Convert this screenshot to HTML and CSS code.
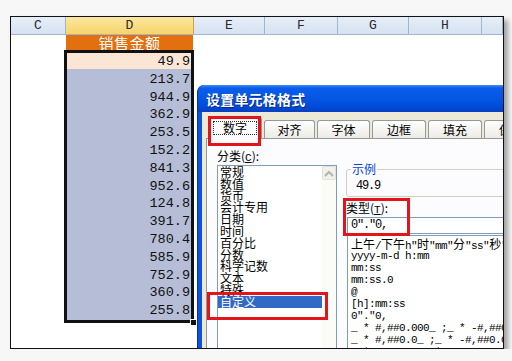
FILE: index.html
```html
<!DOCTYPE html>
<html lang="zh-CN">
<head>
    <meta charset="UTF-8">
    <title>设置单元格格式</title>
    <link rel="stylesheet" href="styles.css">
</head>
<body>
    <div class="frame">
        <div class="colheads">
            <div class="colhead">C</div>
            <div class="colhead active">D</div>
            <div class="colhead">E</div>
            <div class="colhead">F</div>
            <div class="colhead">G</div>
            <div class="colhead">H</div>
            <div class="colhead"></div>
        </div>
        <div class="sheet">
            <div class="title-cell">销售金额</div>
            <div class="selection">
                <div class="cells">
                    <div class="cell first">49.9</div>
                    <div class="cell">213.7</div>
                    <div class="cell">944.9</div>
                    <div class="cell">362.9</div>
                    <div class="cell">253.5</div>
                    <div class="cell">152.2</div>
                    <div class="cell">841.3</div>
                    <div class="cell">952.6</div>
                    <div class="cell">124.8</div>
                    <div class="cell">391.7</div>
                    <div class="cell">780.4</div>
                    <div class="cell">585.9</div>
                    <div class="cell">752.9</div>
                    <div class="cell">360.9</div>
                    <div class="cell">255.8</div>
                </div>
                <span class="fill-handle"></span>
            </div>
        </div>

        <div class="dialog">
            <div class="titlebar">设置单元格格式</div>
            <div class="dlg-body">
                <div class="tabs">
                    <div class="tab current w54"><span class="focus">数字</span></div>
                    <div class="tab w51">对齐</div>
                    <div class="tab w53">字体</div>
                    <div class="tab w54">边框</div>
                    <div class="tab w54">填充</div>
                    <div class="tab w54">保护</div>
                </div>
                <div class="panel">
                    <div class="col-left">
                        <div class="label">分类(<u>C</u>):</div>
                        <div class="catlist">
                            <div class="items">
                                <div class="item">常规</div>
                                <div class="item">数值</div>
                                <div class="item">货币</div>
                                <div class="item">会计专用</div>
                                <div class="item">日期</div>
                                <div class="item">时间</div>
                                <div class="item">百分比</div>
                                <div class="item">分数</div>
                                <div class="item">科学记数</div>
                                <div class="item">文本</div>
                                <div class="item">特殊</div>
                                <div class="item selected">自定义</div>
                            </div>
                            <div class="scroll">
                                <div class="scroll-up">
                                    <svg width="10" height="7" viewBox="0 0 10 7"><path d="M1 6 L5 2 L9 6" fill="none" stroke="#b5b3a8" stroke-width="2"/></svg>
                                </div>
                            </div>
                        </div>
                    </div>
                    <div class="col-right">
                        <fieldset class="sample">
                            <legend>示例</legend>
                            <div class="sample-value">49.9</div>
                        </fieldset>
                        <div class="label type-label">类型(<u>T</u>):</div>
                        <div class="type-input">0"."0,</div>
                        <div class="formats">
                            <div class="fmt"><span class="cjk">上午</span>/<span class="cjk">下午</span>h"<span class="cjk">时</span>"mm"<span class="cjk">分</span>"ss"<span class="cjk">秒</span>"</div>
                            <div class="fmt">yyyy-m-d h:mm</div>
                            <div class="fmt">mm:ss</div>
                            <div class="fmt">mm:ss.0</div>
                            <div class="fmt">@</div>
                            <div class="fmt">[h]:mm:ss</div>
                            <div class="fmt">0"."0,</div>
                            <div class="fmt">_ * #,##0.000_ ;_ * -#,##0.000_ </div>
                            <div class="fmt">_ * #,##0.0_ ;_ * -#,##0.0_ </div>
                            <div class="fmt">_ * #,##0_ ;_ * -#,##0_ </div>
                        </div>
                    </div>
                </div>
            </div>
        </div>

        <span class="mark mark-tab"></span>
        <span class="mark mark-custom"></span>
        <span class="mark mark-type"></span>
    </div>
</body>
</html>
```

FILE: styles.css
```css
* {
    margin: 0;
    padding: 0;
    box-sizing: border-box;
}
body {
    background-color: #f7f7f7;
    font-family: "Noto Sans CJK SC", sans-serif;
    color: #000;
}
.frame {
    position: relative;
    width: 494px;
    height: 333px;
    margin: 16px 0 0 10px;
    border: 1px solid #111;
    background-color: #fff;
    box-shadow: 4px 4px 5px rgba(0, 0, 0, 0.35);
    overflow: hidden;
}

/* column headers */
.colheads {
    display: grid;
    grid-template-columns: 55px 128px 71px 73px 71px 73px 1fr;
    height: 18px;
    border-bottom: 1px solid #9eb6ce;
    background: linear-gradient(#e6eef8, #d6e2f2);
}
.colhead {
    border-right: 1px solid #9eb6ce;
    text-align: center;
    font: 13px/17px "Liberation Mono", monospace;
    color: #2a2a2a;
}
.colhead.active {
    background: linear-gradient(#fbe7a0, #f6d46a);
    border-right-color: #c9a44a;
}

/* sheet */
.sheet {
    padding-left: 53px;
}
.title-cell {
    width: 127px;
    height: 15px;
    margin-left: 2px;
    background-color: #e2700f;
    color: #fff;
    font-size: 15px;
    line-height: 15px;
    text-align: center;
    letter-spacing: 0.5px;
}
.selection {
    position: relative;
    width: 130px;
    height: 273px;
    border: 3px solid #111;
}
.cells {
    height: 267px;
    overflow: hidden;
    background-color: #b6bdd6;
}
.cell {
    height: 17.8px;
    padding-right: 1px;
    text-align: right;
    font: 13.5px/18.6px "Liberation Mono", monospace;
    color: #111;
}
.cell.first {
    background: linear-gradient(#fbe6d6 0, #fbe6d6 16px, transparent 16px);
}
.fill-handle {
    position: absolute;
    right: -6px;
    bottom: -6px;
    width: 7px;
    height: 7px;
    background-color: #111;
    border: 1px solid #fff;
}

/* dialog */
.dialog {
    position: absolute;
    left: 186px;
    top: 68px;
    width: 330px;
    height: 290px;
    background-color: #0b52dc;
    border-left: 1px solid #0a2f9c;
    border-radius: 7px 7px 0 0;
    overflow: hidden;
}
.titlebar {
    height: 27px;
    padding-left: 8px;
    background: linear-gradient(#3f8ff7 0, #0a5cea 3px, #0556e4 50%, #0049d6 85%, #0a3fbb 100%);
    color: #fff;
    font-size: 14px;
    font-weight: bold;
    line-height: 28px;
    letter-spacing: 0.2px;
    text-shadow: 1px 1px 0 #0b2a86;
}
.dlg-body {
    height: 263px;
    margin-left: 4px;
    padding: 5px 0 0 4px;
    background-color: #ece9d8;
}
.tabs {
    display: flex;
    align-items: flex-end;
    gap: 2px;
    height: 21px;
    padding-left: 2px;
    position: relative;
    z-index: 1;
}
.tab {
    height: 18px;
    border: 1px solid #919b9c;
    border-bottom: none;
    border-radius: 3px 3px 0 0;
    background: linear-gradient(#ffffff, #ecebe5);
    font-size: 12px;
    line-height: 17px;
    text-align: center;
    flex-shrink: 0;
}
.tab.current {
    height: 22px;
    margin-bottom: -1px;
    border-top: 2px solid #f7b94a;
    background: #fcfcfe;
    line-height: 18px;
}
.focus {
    display: inline-block;
    padding: 0 9px;
    line-height: 12px;
    border: 1px dotted #333;
}
.w51 { width: 51px; }
.w53 { width: 53px; }
.w54 { width: 54px; }
.panel {
    display: flex;
    gap: 9px;
    height: 240px;
    padding: 10px 0 0 10px;
    border: 1px solid #919b9c;
    background-color: #fcfcfe;
}
.label {
    font-size: 12px;
    line-height: 14px;
    height: 14px;
}
.label u {
    text-decoration: underline;
    font-family: "Liberation Mono", monospace;
    font-size: 11px;
}
.col-left {
    width: 120px;
    flex-shrink: 0;
}
.catlist {
    display: flex;
    height: 200px;
    margin-top: 2px;
    border: 1px solid #7f9db9;
    background-color: #fff;
}
.items {
    flex: 1;
}
.item {
    height: 11.8px;
    padding-left: 2px;
    font-size: 12px;
    line-height: 11.8px;
    white-space: nowrap;
}
.item.selected {
    background-color: #316ac5;
    color: #fff;
}
.scroll {
    width: 14px;
    background-color: #fbfbf8;
}
.scroll-up {
    height: 14px;
    display: flex;
    align-items: center;
    justify-content: center;
    background-color: #f1f0ea;
    border: 1px solid #e2e1da;
    border-radius: 2px;
}
.col-right {
    width: 180px;
    flex-shrink: 0;
    padding-top: 13px;
}
.sample {
    margin: 0;
    padding: 3px 8px 3px;
    border: 1px solid #d0d0bf;
    border-radius: 3px;
    min-width: 0;
}
.sample legend {
    margin-left: -4px;
    padding: 0 1px;
    color: #0046d5;
    font-size: 12px;
    line-height: 14px;
}
.sample-value {
    padding-left: 1px;
    font: 12px/14px "Liberation Mono", monospace;
    letter-spacing: -1.2px;
}
.type-label {
    margin-top: 4px;
    line-height: 13px;
}
.type-input {
    height: 17px;
    margin: 2px 0 0 1px;
    padding-left: 3px;
    border: 1px solid #7f9db9;
    background-color: #fff;
    font: 12px/15px "Liberation Mono", monospace;
    letter-spacing: -1.2px;
}
.formats {
    height: 130px;
    margin: 1px 0 0 1px;
    padding: 2px 0 0 3px;
    border: 1px solid #7f9db9;
    background-color: #fff;
    overflow: hidden;
}
.fmt {
    height: 12px;
    font: 11px/12px "Liberation Mono", "Noto Sans CJK SC", monospace;
    letter-spacing: -0.6px;
    white-space: pre;
}
.fmt .cjk {
    font-family: "Noto Sans CJK SC", sans-serif;
    font-size: 12px;
    letter-spacing: 0;
}

/* red annotation boxes */
.mark {
    position: absolute;
    border: 3px solid #e3141c;
    z-index: 2;
}
.mark-tab {
    left: 197px;
    top: 99px;
    width: 53px;
    height: 30px;
}
.mark-custom {
    left: 196px;
    top: 275px;
    width: 121px;
    height: 28px;
}
.mark-type {
    left: 332px;
    top: 181px;
    width: 67px;
    height: 38px;
}
```
